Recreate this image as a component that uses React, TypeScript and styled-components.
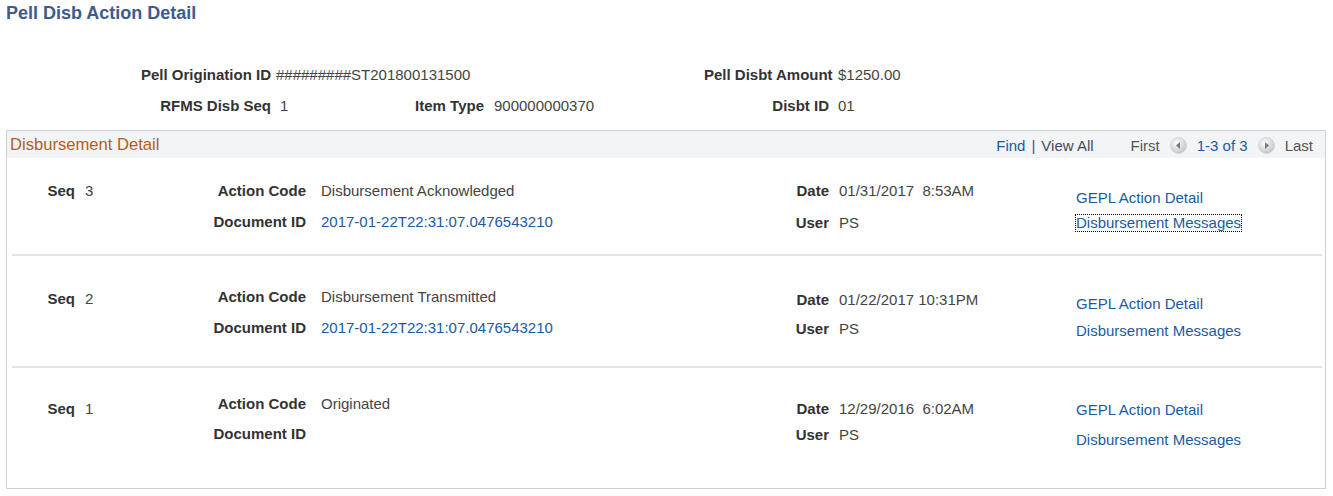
import * as React from 'react';
import styled, { createGlobalStyle } from 'styled-components';

const GlobalStyle = createGlobalStyle`
	body {
		margin: 0;
		background: #ffffff;
		font-family: 'Liberation Sans', Arial, sans-serif;
		font-size: 15px;
		color: #444444;
	}
`;

const Page = styled.div`
	padding: 0 7px 0 6px;
`;

const PageTitle = styled.h1`
	margin: 3px 0 0;
	font-size: 18px;
	line-height: 20px;
	font-weight: 700;
	color: #3d5c8c;
`;

const HeaderGrid = styled.div`
	display: grid;
	grid-template-columns: 265px 100px 113px 220px 125px 1fr;
	grid-auto-rows: 16px;
	row-gap: 15px;
	margin-top: 44px;
	line-height: 16px;
`;

const Label = styled.div`
	font-weight: 700;
	color: #333333;
	text-align: right;
	white-space: nowrap;
`;

const Value = styled.div<{ $indent?: number; $span?: number; $link?: boolean }>`
	padding-left: ${({ $indent = 10 }) => $indent}px;
	grid-column: ${({ $span = 1 }) => `span ${$span}`};
	color: ${({ $link }) => ($link ? '#1c5aa0' : '#444444')};
	white-space: nowrap;
`;

const Section = styled.div`
	margin-top: 16px;
	border: 1px solid #cdd2d6;
`;

const SectionHeader = styled.div`
	display: flex;
	align-items: center;
	justify-content: space-between;
	height: 27px;
	padding: 0 12px 0 3px;
	background: #f2f4f5;
`;

const SectionTitle = styled.div`
	font-size: 16.6px;
	color: #b0601c;
`;

const Toolbar = styled.div`
	display: flex;
	align-items: center;
	padding-top: 2px;
`;

const ToolLink = styled.a<{ $muted?: boolean }>`
	color: ${({ $muted }) => ($muted ? '#3e4e60' : '#1c5aa0')};
	text-decoration: none;
	cursor: pointer;
`;

const Pipe = styled.span`
	color: #1c5aa0;
	margin: 0 6px;
`;

const Pager = styled.div`
	display: flex;
	align-items: center;
	gap: 10px;
	margin-left: 37px;
`;

const PagerText = styled.span<{ $link?: boolean }>`
	color: ${({ $link }) => ($link ? '#1c5aa0' : '#555555')};
`;

const Row = styled.div<{ $height: number }>`
	display: flex;
	height: ${({ $height }) => $height}px;
	line-height: 16px;
`;

const Divider = styled.div`
	height: 2px;
	margin: 0 3px 0 5px;
	background: #e4e4e4;
`;

const FieldGroup = styled.div<{ $width?: number; $label: number; $top: number; $gap: number; $indent: number }>`
	display: grid;
	grid-template-columns: ${({ $label }) => $label}px 1fr;
	grid-auto-rows: 16px;
	align-content: start;
	row-gap: ${({ $gap }) => $gap}px;
	padding-top: ${({ $top }) => $top}px;
	width: ${({ $width }) => ($width ? `${$width}px` : 'auto')};
	flex: none;

	& > ${Value} {
		padding-left: ${({ $indent }) => $indent}px;
	}
`;

const LinkGroup = styled.div<{ $top: number; $gap: number }>`
	display: flex;
	flex-direction: column;
	align-items: flex-start;
	gap: ${({ $gap }) => $gap}px;
	padding-top: ${({ $top }) => $top}px;
`;

const RowLink = styled.a<{ $focused?: boolean }>`
	color: #1c5aa0;
	text-decoration: none;
	cursor: pointer;
	outline: ${({ $focused }) => ($focused ? '1px dotted #000000' : 'none')};
	outline-offset: 0;
`;

const PagerIcon = ({ dir }: { dir: 'left' | 'right' }) => (
	<svg width="17" height="17" viewBox="0 0 17 17">
		<defs>
			<radialGradient id={`pg-${dir}`} cx="40%" cy="35%" r="65%">
				<stop offset="0%" stopColor="#ffffff" />
				<stop offset="100%" stopColor="#c4c6c8" />
			</radialGradient>
		</defs>
		<circle cx="8.5" cy="8.5" r="8" fill={`url(#pg-${dir})`} stroke="#d3d5d7" strokeWidth="1" />
		{dir === 'left' ? (
			<polygon points="10,5 6,8.5 10,12" fill="#7b7b7b" />
		) : (
			<polygon points="7,5 11,8.5 7,12" fill="#7b7b7b" />
		)}
	</svg>
);

type Layout = { top: number; gap: number };

type Disbursement = {
	seq: string;
	action: string;
	documentId: string;
	date: string;
	user: string;
	height: number;
	focused?: boolean;
	seqTop: number;
	actionLayout: Layout;
	dateLayout: Layout;
	linkLayout: Layout;
};

const rows: Disbursement[] = [
	{
		seq: '3',
		action: 'Disbursement Acknowledged',
		documentId: '2017-01-22T22:31:07.0476543210',
		date: '01/31/2017  8:53AM',
		user: 'PS',
		height: 96,
		focused: true,
		seqTop: 25,
		actionLayout: { top: 25, gap: 15 },
		dateLayout: { top: 25, gap: 16 },
		linkLayout: { top: 32, gap: 9 },
	},
	{
		seq: '2',
		action: 'Disbursement Transmitted',
		documentId: '2017-01-22T22:31:07.0476543210',
		date: '01/22/2017 10:31PM',
		user: 'PS',
		height: 110,
		seqTop: 35,
		actionLayout: { top: 33, gap: 15 },
		dateLayout: { top: 36, gap: 13 },
		linkLayout: { top: 40, gap: 11 },
	},
	{
		seq: '1',
		action: 'Originated',
		documentId: '',
		date: '12/29/2016  6:02AM',
		user: 'PS',
		height: 120,
		seqTop: 33,
		actionLayout: { top: 28, gap: 14 },
		dateLayout: { top: 33, gap: 10 },
		linkLayout: { top: 34, gap: 14 },
	},
];

const App = () => (
	<>
		<GlobalStyle />
		<Page>
			<PageTitle>Pell Disb Action Detail</PageTitle>

			<HeaderGrid>
				<Label>Pell Origination ID</Label>
				<Value $indent={5} $span={3}>#########ST201800131500</Value>
				<Label>Pell Disbt Amount</Label>
				<Value $indent={9}>$1250.00</Value>

				<Label>RFMS Disb Seq</Label>
				<Value $indent={9}>1</Value>
				<Label>Item Type</Label>
				<Value>900000000370</Value>
				<Label>Disbt ID</Label>
				<Value $indent={9}>01</Value>
			</HeaderGrid>

			<Section>
				<SectionHeader>
					<SectionTitle>Disbursement Detail</SectionTitle>
					<Toolbar>
						<ToolLink>Find</ToolLink>
						<Pipe>|</Pipe>
						<ToolLink $muted>View All</ToolLink>
						<Pager>
							<PagerText>First</PagerText>
							<PagerIcon dir="left" />
							<PagerText $link>1-3 of 3</PagerText>
							<PagerIcon dir="right" />
							<PagerText>Last</PagerText>
						</Pager>
					</Toolbar>
				</SectionHeader>

				{rows.map((row, i) => (
					<React.Fragment key={row.seq}>
						{i > 0 && <Divider />}
						<Row $height={row.height}>
							<FieldGroup $width={193} $label={68} $indent={10} $top={row.seqTop} $gap={0}>
								<Label>Seq</Label>
								<Value>{row.seq}</Value>
							</FieldGroup>
							<FieldGroup
								$width={500}
								$label={106}
								$indent={15}
								$top={row.actionLayout.top}
								$gap={row.actionLayout.gap}
							>
								<Label>Action Code</Label>
								<Value>{row.action}</Value>
								<Label>Document ID</Label>
								<Value $link>{row.documentId}</Value>
							</FieldGroup>
							<FieldGroup
								$width={376}
								$label={129}
								$indent={10}
								$top={row.dateLayout.top}
								$gap={row.dateLayout.gap}
							>
								<Label>Date</Label>
								<Value style={{ whiteSpace: 'pre' }}>{row.date}</Value>
								<Label>User</Label>
								<Value>{row.user}</Value>
							</FieldGroup>
							<LinkGroup $top={row.linkLayout.top} $gap={row.linkLayout.gap}>
								<RowLink>GEPL Action Detail</RowLink>
								<RowLink $focused={row.focused}>Disbursement Messages</RowLink>
							</LinkGroup>
						</Row>
					</React.Fragment>
				))}
			</Section>
		</Page>
	</>
);

export default App;
